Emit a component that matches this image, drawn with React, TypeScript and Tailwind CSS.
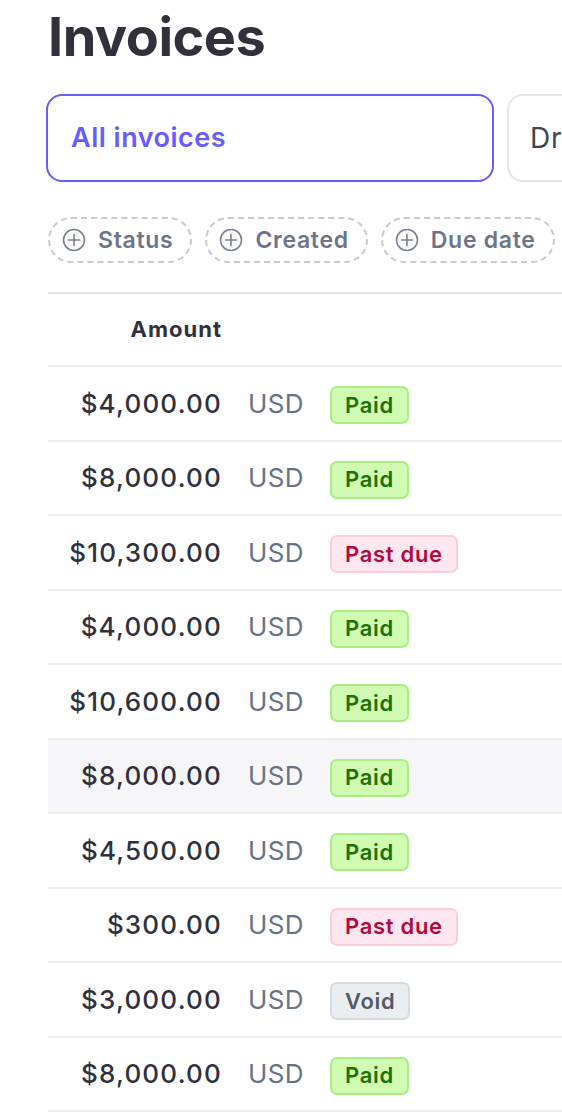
import React from 'react';

type Status = 'Paid' | 'Past due' | 'Void';

const rows: { amount: string; status: Status }[] = [
  { amount: '$4,000.00', status: 'Paid' },
  { amount: '$8,000.00', status: 'Paid' },
  { amount: '$10,300.00', status: 'Past due' },
  { amount: '$4,000.00', status: 'Paid' },
  { amount: '$10,600.00', status: 'Paid' },
  { amount: '$8,000.00', status: 'Paid' },
  { amount: '$4,500.00', status: 'Paid' },
  { amount: '$300.00', status: 'Past due' },
  { amount: '$3,000.00', status: 'Void' },
  { amount: '$8,000.00', status: 'Paid' },
];

const badgeStyles: Record<Status, string> = {
  Paid: 'bg-[#d1fab3] border-[#a8ee85] text-[#217005]',
  'Past due': 'bg-[#ffe7f2] border-[#ffccdf] text-[#b3093c]',
  Void: 'bg-[#ebeef1] border-[#d5dbe1] text-[#545969]',
};

function PlusCircle() {
  return (
    <svg width="24" height="24" viewBox="0 0 24 24" fill="none" stroke="currentColor" strokeWidth="1.6" strokeLinecap="round">
      <circle cx="12" cy="12" r="10.5" />
      <path d="M12 6.5v11M6.5 12h11" />
    </svg>
  );
}

function FilterPill({ label }: { label: string }) {
  return (
    <div className="flex items-center gap-[12px] h-[46px] pl-[12px] pr-[17px] rounded-full border-2 border-dashed border-[#c6ccd4] text-[#6c7688] shrink-0">
      <span className="text-[#7a8392]"><PlusCircle /></span>
      <span className="text-[23px] font-semibold leading-none tracking-[0.7px]">{label}</span>
    </div>
  );
}

export default function App() {
  return (
    <div className="w-[562px] h-[1112px] overflow-hidden bg-white text-[#30313d]" style={{ fontFamily: 'Inter, "Noto Sans", sans-serif' }}>
      <h1 className="ml-[48px] mt-[10px] text-[54px] font-bold leading-none tracking-[-0.5px] text-[#30313d]">Invoices</h1>

      {/* Tabs */}
      <div className="mt-[30px] ml-[46px] flex gap-[13px]">
        <div className="w-[448px] h-[88px] shrink-0 rounded-[16px] border-2 border-[#675dff] flex items-center pl-[23px]">
          <span className="text-[27px] font-semibold tracking-[0.5px] text-[#675dff]">All invoices</span>
        </div>
        <div className="w-[448px] h-[88px] shrink-0 rounded-[16px] border-2 border-[#e3e5e8] flex items-center pl-[21px]">
          <span className="text-[28px] tracking-[0.8px] text-[#414552]">Draft</span>
        </div>
      </div>

      {/* Filters */}
      <div className="mt-[35px] ml-[48px] flex gap-[13px]">
        <FilterPill label="Status" />
        <FilterPill label="Created" />
        <FilterPill label="Due date" />
      </div>

      {/* Table */}
      <div className="mt-[29px] ml-[48px] border-t-2 border-[#e3e5e8]">
        <div className="h-[73px] flex items-center border-b-2 border-[#ebeef1]">
          <div className="w-[174px] text-right text-[22px] font-bold tracking-[1px]">Amount</div>
        </div>
        {rows.map((r, i) => (
          <div key={i} className={`h-[74.5px] flex items-center border-b-2 border-[#ebeef1] ${i === 5 ? 'bg-[#f6f6f9]' : ''}`}>
            <div className="w-[174px] text-right text-[26px] font-medium tracking-[1.2px]">{r.amount}</div>
            <div className="ml-[26px] w-[82px] text-[26px] tracking-[0.3px] text-[#687385]">USD</div>
            <div className={`h-[38px] px-[13px] mt-[4px] flex items-center rounded-[7px] border-2 text-[22px] font-semibold tracking-[0.7px] ${badgeStyles[r.status]}`}>
              {r.status}
            </div>
          </div>
        ))}
      </div>
    </div>
  );
}
